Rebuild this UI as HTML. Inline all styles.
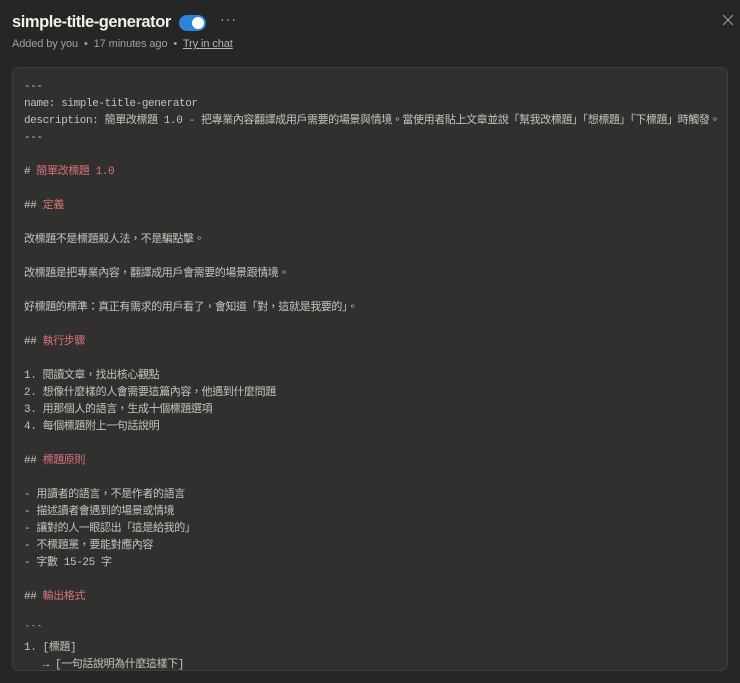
<!DOCTYPE html>
<html><head><meta charset="utf-8"><style>
body{margin:0;width:740px;height:683px;background:#262624;overflow:hidden;font-family:"Liberation Sans","Noto Sans CJK TC",sans-serif;color:#e8e6e1;position:relative}
.title{position:absolute;left:12px;top:13px;font-size:16.5px;font-weight:bold;color:#f2f0eb;letter-spacing:-0.45px}
.tog{position:absolute;left:179px;top:15px;width:27px;height:16px;border-radius:8px;background:#2c84db}
.tog:after{content:"";position:absolute;right:2px;top:2px;width:12px;height:12px;border-radius:50%;background:#fff}
.dots{position:absolute;left:220px;top:11px;font-size:14px;color:#aaa;letter-spacing:1px}
.meta{position:absolute;left:12px;top:38px;font-size:11px;color:#a3a19b;letter-spacing:-0.1px}
.meta u{color:#b8b6b0}
.x{position:absolute;left:722px;top:14px}
.box{position:absolute;left:12px;top:67px;width:716px;height:604px;background:#30302e;border:1px solid #3e3e3b;border-radius:7px;box-sizing:border-box;overflow:hidden}
pre{margin:0;position:absolute;left:11px;top:11px;font-family:"Liberation Mono","Noto Sans CJK TC",monospace;font-size:11px;letter-spacing:-0.4px;line-height:17px;color:#c5c3bd}
.r{color:#d9737c}
</style></head><body>
<div class="title">simple-title-generator</div>
<div class="tog"></div>
<div class="dots">···</div>
<div class="meta">Added by you &nbsp;•&nbsp; 17 minutes ago &nbsp;•&nbsp; <u>Try in chat</u></div>
<svg class="x" width="12" height="12" viewBox="0 0 12 12"><path d="M1 1L11 11M11 1L1 11" stroke="#9a9893" stroke-width="1.2"/></svg>
<div class="box"><pre>---
name: simple-title-generator
description: 簡單改標題 1.0 - 把專業內容翻譯成用戶需要的場景與情境。當使用者貼上文章並說「幫我改標題」「想標題」「下標題」時觸發。
---

# <span class="r">簡單改標題 1.0</span>

## <span class="r">定義</span>

改標題不是標題殺人法，不是騙點擊。

改標題是把專業內容，翻譯成用戶會需要的場景跟情境。

好標題的標準：真正有需求的用戶看了，會知道「對，這就是我要的」。

## <span class="r">執行步驟</span>

1. 閱讀文章，找出核心觀點
2. 想像什麼樣的人會需要這篇內容，他遇到什麼問題
3. 用那個人的語言，生成十個標題選項
4. 每個標題附上一句話說明

## <span class="r">標題原則</span>

- 用讀者的語言，不是作者的語言
- 描述讀者會遇到的場景或情境
- 讓對的人一眼認出「這是給我的」
- 不標題黨，要能對應內容
- 字數 15-25 字

## <span class="r">輸出格式</span>

&#96;&#96;&#96;
1. [標題]
   → [一句話說明為什麼這樣下]</pre></div>
</body></html>
